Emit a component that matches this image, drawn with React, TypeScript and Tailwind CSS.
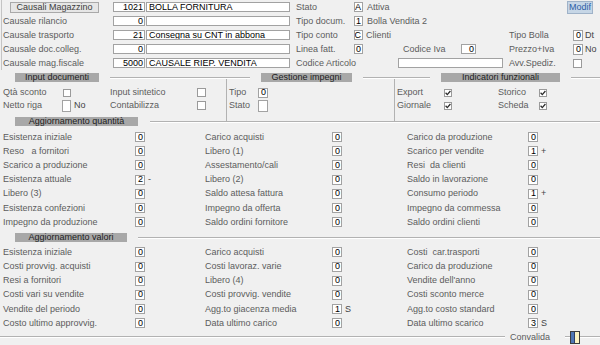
import React from 'react'

type Row = [string, string, string?]

const qtyCols: Row[][] = [
    [
        ['Esistenza iniziale', '0'],
        ['Reso   a fornitori', '0'],
        ['Scarico a produzione', '0'],
        ['Esistenza attuale', '2', '-'],
        ['Libero (3)', '0'],
        ['Esistenza confezioni', '0'],
        ['Impegno da produzione', '0'],
    ],
    [
        ['Carico acquisti', '0'],
        ['Libero (1)', '0'],
        ['Assestamento/cali', '0'],
        ['Libero (2)', '0'],
        ['Saldo attesa fattura', '0'],
        ['Impegno da offerta', '0'],
        ['Saldo ordini fornitore', '0'],
    ],
    [
        ['Carico da produzione', '0'],
        ['Scarico per vendite', '1', '+'],
        ['Resi  da clienti', '0'],
        ['Saldo in lavorazione', '0'],
        ['Consumo periodo', '1', '+'],
        ['Impegno da commessa', '0'],
        ['Saldo ordini clienti', '0'],
    ],
]

const valCols: Row[][] = [
    [
        ['Esistenza iniziale', '0'],
        ['Costi provvig. acquisti', '0'],
        ['Resi a fornitori', '0'],
        ['Costi vari su vendite', '0'],
        ['Vendite del periodo', '0'],
        ['Costo ultimo approvvig.', '0'],
    ],
    [
        ['Carico acquisti', '0'],
        ['Costi lavoraz. varie', '0'],
        ['Libero (4)', '0'],
        ['Costi provvig. vendite', '0'],
        ['Agg.to giacenza media', '1', 'S'],
        ['Data ultimo carico', '0'],
    ],
    [
        ['Costi  car.trasporti', '0'],
        ['Carico da produzione', '0'],
        ["Vendite dell'anno", '0'],
        ['Costi sconto merce', '0'],
        ['Agg.to costo standard', '0'],
        ['Data ultimo scarico', '3', 'S'],
    ],
]

// column geometry for the two "Aggiornamento" grids
const colCls = ['w-[200px] pl-[3px]', 'w-[200px] pl-[5px]', 'w-[200px] pl-[7px]']
const lblCls = ['w-[132px]', 'w-[127px]', 'w-[121px]']

function Field({ v = '', cls, left }: { v?: string; cls: string; left?: boolean }) {
    return (
        <div
            className={`flex items-center shrink-0 border border-[#a2a2a2] bg-white text-black leading-none whitespace-nowrap overflow-hidden ${left ? 'justify-start pl-[2px]' : 'justify-end pr-[1px]'} ${cls}`}
        >
            {v}
        </div>
    )
}

function Check({ on, cls = 'w-[8px] h-[8px]' }: { on?: boolean; cls?: string }) {
    return (
        <div className={`flex items-center justify-center shrink-0 border border-[#9a9a9a] bg-white ${cls}`}>
            {on && (
                <svg width="6" height="6" viewBox="0 0 6 6">
                    <path d="M0.6 2.8 L2.3 4.6 L5.4 1" stroke="#2b2b2b" strokeWidth="1.3" fill="none" />
                </svg>
            )}
        </div>
    )
}

function Rule({ cls }: { cls: string }) {
    return <div className={`h-[2px] border-t border-[#b2b2b2] bg-white ${cls}`} />
}

function Bar({ t, cls }: { t: string; cls: string }) {
    return (
        <div className={`h-[9px] shrink-0 bg-[#a8a8a8] text-[#1c1c1c] text-center leading-[9px] whitespace-nowrap ${cls}`}>
            {t}
        </div>
    )
}

function Lbl({ t, cls }: { t: string; cls: string }) {
    return <div className={`shrink-0 whitespace-pre text-[#5c5c5c] ${cls}`}>{t}</div>
}

function Grid({ cols }: { cols: Row[][] }) {
    return (
        <div className="flex">
            {cols.map((col, ci) => (
                <div key={ci} className={colCls[ci]}>
                    {col.map(([label, value, suffix], ri) => (
                        <div key={ri} className="flex items-center h-[14.2px]">
                            <Lbl t={label} cls={lblCls[ci]} />
                            <Field v={value} cls="w-[10px] h-[10px]" />
                            {suffix && <span className="ml-[3px] text-[#444]">{suffix}</span>}
                        </div>
                    ))}
                </div>
            ))}
        </div>
    )
}

export default function App() {
    return (
        <div className="w-[600px] h-[345px] overflow-hidden bg-[#f0f0f0] text-[9px] leading-none [font-family:'Liberation_Sans',Arial,sans-serif]">
            {/* Causali */}
            <div className="ml-[1px] pl-[1px] border-l border-[#c4c4c4]">
                <div className="flex items-center h-[14px]">
                    <div className="w-[110px] shrink-0 pl-[7px]">
                        <div className="w-[89px] h-[11px] border border-[#a9a9a9] bg-[#e6e6e6] text-[#3c3c3c] text-center leading-[9px]">
                            Causali Magazzino
                        </div>
                    </div>
                    <Field v="1021" cls="w-[32px] h-[10px]" />
                    <Field v="BOLLA FORNITURA" cls="ml-[1px] w-[144px] h-[10px]" left />
                    <Lbl t="Stato" cls="ml-[6px] w-[58px]" />
                    <Field v="A" cls="w-[9px] h-[10px]" />
                    <Lbl t="Attiva" cls="ml-[4px]" />
                    <div className="flex-1" />
                    <div className="w-[26px] h-[13px] mr-[7px] border border-[#9fb2c8] bg-[#c6d6e6] text-[#2c5ea6] leading-[11px] pl-[1px]">
                        Modif
                    </div>
                </div>
                <div className="flex items-center h-[14px]">
                    <Lbl t="Causale rilancio" cls="w-[110px]" />
                    <Field v="0" cls="w-[32px] h-[10px]" />
                    <Field cls="ml-[1px] w-[144px] h-[10px]" left />
                    <Lbl t="Tipo docum." cls="ml-[6px] w-[58px]" />
                    <Field v="1" cls="w-[9px] h-[10px]" />
                    <Lbl t="Bolla Vendita 2" cls="ml-[4px]" />
                </div>
                <div className="flex items-center h-[14px]">
                    <Lbl t="Causale trasporto" cls="w-[110px]" />
                    <Field v="21" cls="w-[32px] h-[10px]" />
                    <Field v="Consegna su CNT in abbona" cls="ml-[1px] w-[144px] h-[10px]" left />
                    <Lbl t="Tipo conto" cls="ml-[6px] w-[58px]" />
                    <Field v="C" cls="w-[9px] h-[10px]" />
                    <Lbl t="Clienti" cls="w-[146px] pl-[3px]" />
                    <Lbl t="Tipo Bolla" cls="w-[64px]" />
                    <Field v="0" cls="w-[10px] h-[11px]" />
                    <span className="ml-[2px] text-[#444]">Dt</span>
                </div>
                <div className="flex items-center h-[14px]">
                    <Lbl t="Causale doc.colleg." cls="w-[110px]" />
                    <Field v="0" cls="w-[32px] h-[10px]" />
                    <Field cls="ml-[1px] w-[144px] h-[10px]" left />
                    <Lbl t="Linea fatt." cls="ml-[6px] w-[58px]" />
                    <Field v="0" cls="w-[9px] h-[10px]" />
                    <div className="w-[40px] shrink-0" />
                    <Lbl t="Codice Iva" cls="w-[58px]" />
                    <Field v="0" cls="w-[15px] h-[10px]" />
                    <div className="w-[33px] shrink-0" />
                    <Lbl t="Prezzo+Iva" cls="w-[64px]" />
                    <Field v="0" cls="w-[10px] h-[11px]" />
                    <span className="ml-[2px] text-[#444]">No</span>
                </div>
                <div className="flex items-center h-[14px]">
                    <Lbl t="Causale mag.fiscale" cls="w-[110px]" />
                    <Field v="5000" cls="w-[32px] h-[10px]" />
                    <Field v="CAUSALE RIEP. VENDITA" cls="ml-[1px] w-[144px] h-[10px]" left />
                    <Lbl t="Codice Articolo" cls="ml-[6px] w-[102px]" />
                    <Field cls="w-[105px] h-[10px]" left />
                    <div className="w-[6px] shrink-0" />
                    <Lbl t="Avv.Spediz." cls="w-[64px]" />
                    <Check cls="w-[9px] h-[9px]" />
                </div>
            </div>

            {/* Input documenti / Gestione impegni / Indicatori funzionali */}
            <div className="relative z-10 flex items-center h-[9px] mt-[3px]">
                <div className="w-[15px] shrink-0" />
                <Bar t="Input documenti" cls="w-[84px]" />
                <Rule cls="ml-[11px] w-[140px]" />
                <Bar t="Gestione impegni" cls="ml-[11px] w-[91px]" />
                <Rule cls="ml-[11px] w-[67px]" />
                <Bar t="Indicatori funzionali" cls="ml-[11px] w-[119px]" />
                <Rule cls="ml-[11px] flex-1" />
            </div>
            <div className="flex h-[44px] -mt-[4px]">
                <div className="w-[226px] pl-[3px] pt-[8px]">
                    <div className="flex items-center h-[13px]">
                        <Lbl t="Qtà sconto" cls="w-[60px]" />
                        <Check />
                        <Lbl t="Input sintetico" cls="ml-[39px] w-[86px]" />
                        <Check cls="ml-[1px] w-[9px] h-[9px]" />
                    </div>
                    <div className="flex items-center h-[13px]">
                        <Lbl t="Netto riga" cls="w-[59px]" />
                        <Field cls="w-[9px] h-[12px]" />
                        <span className="w-[39px] shrink-0 pl-[3px] text-[#444]">No</span>
                        <Lbl t="Contabilizza" cls="w-[87px]" />
                        <Check cls="w-[9px] h-[9px]" />
                    </div>
                </div>
                <div className="w-[168px] border-l border-[#b2b2b2] pl-[2px] pt-[8px]">
                    <div className="flex items-center h-[13px]">
                        <Lbl t="Tipo" cls="w-[29px]" />
                        <Field v="0" cls="w-[10px] h-[10px]" left />
                    </div>
                    <div className="flex items-center h-[13px]">
                        <Lbl t="Stato" cls="w-[29px]" />
                        <Field cls="w-[10px] h-[12px]" />
                    </div>
                </div>
                <div className="flex-1 border-l border-[#b2b2b2] pl-[2px] pt-[8px]">
                    <div className="flex items-center h-[13px]">
                        <Lbl t="Export" cls="w-[47px]" />
                        <Check on />
                        <Lbl t="Storico" cls="ml-[46px] w-[41px]" />
                        <Check on />
                    </div>
                    <div className="flex items-center h-[13px]">
                        <Lbl t="Giornale" cls="w-[47px]" />
                        <Check on />
                        <Lbl t="Scheda" cls="ml-[46px] w-[41px]" />
                        <Check on />
                    </div>
                </div>
            </div>

            {/* Aggiornamento quantità */}
            <div className="flex items-center h-[9px] -mt-[5px]">
                <div className="w-[15px] shrink-0" />
                <Bar t="Aggiornamento quantità" cls="w-[123px]" />
                <Rule cls="ml-[12px] flex-1" />
            </div>
            <div className="pt-[4px]">
                <Grid cols={qtyCols} />
            </div>

            {/* Aggiornamento valori */}
            <div className="flex items-center h-[9px] mt-[4px]">
                <div className="w-[15px] shrink-0" />
                <Bar t="Aggiornamento valori" cls="w-[112px]" />
                <Rule cls="ml-[11px] flex-1" />
            </div>
            <div className="pt-[3px]">
                <Grid cols={valCols} />
            </div>

            {/* Convalida */}
            <div className="flex items-center h-[14px]">
                <Rule cls="w-[505px] shrink-0" />
                <span className="ml-[5px] text-[#5c5c5c]">Convalida</span>
                <Rule cls="ml-[15px] w-[5px] shrink-0" />
                <svg width="10" height="13" viewBox="0 0 10 13" className="shrink-0">
                    <rect x="0.5" y="0.5" width="9" height="12" fill="#fbf3c2" stroke="#3d3d3d" />
                    <rect x="1" y="1" width="3" height="11" fill="#4f76b4" />
                    <line x1="4.5" y1="1" x2="4.5" y2="12" stroke="#2d3f66" />
                </svg>
                <Rule cls="flex-1" />
            </div>
        </div>
    )
}
